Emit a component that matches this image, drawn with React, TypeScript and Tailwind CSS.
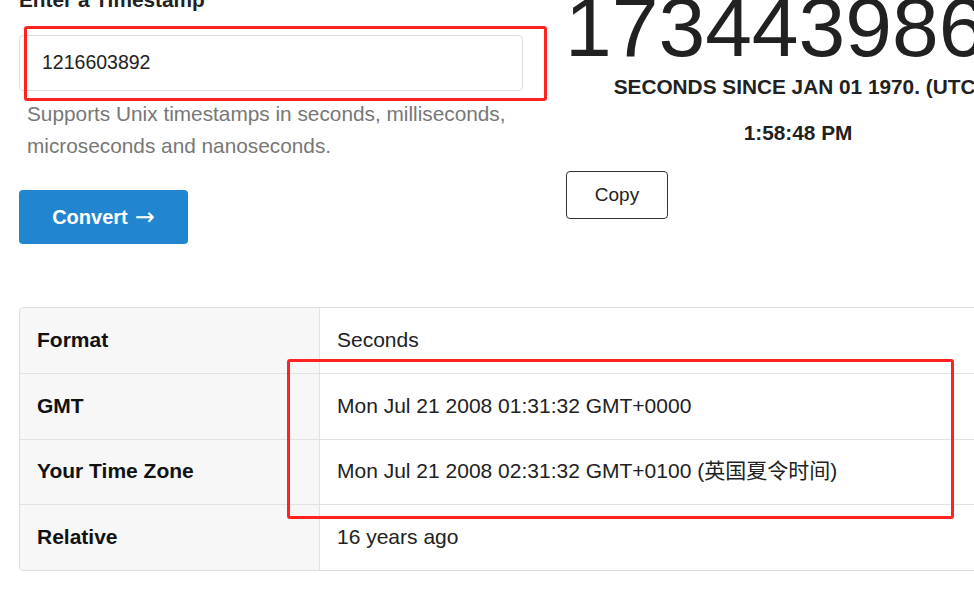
import React from "react";

const rows = [
  { label: "Format", value: "Seconds" },
  { label: "GMT", value: "Mon Jul 21 2008 01:31:32 GMT+0000" },
  { label: "Your Time Zone", value: "Mon Jul 21 2008 02:31:32 GMT+0100 (英国夏令时间)" },
  { label: "Relative", value: "16 years ago" },
];

export default function App() {
  return (
    <div className="relative w-[974px] h-[595px] overflow-hidden bg-white font-['Liberation_Sans','Noto_Sans_CJK_SC',sans-serif] text-[#212121]">
      <div className="flex items-start pl-[19px] -mt-[13px]">
        {/* converter input */}
        <div className="w-[504px] shrink-0">
          <label className="block h-[26px] text-[20.8px] leading-[26px] font-bold">
            Enter a Timestamp
          </label>
          <div className="mt-[22px] flex h-[56px] items-center rounded-[4px] border border-[#dedede] pl-[22px] text-[19.5px]">
            1216603892
          </div>
          <p className="ml-[8px] mt-[7px] w-[496px] text-[20.8px] leading-[32px] text-[#777]">
            Supports Unix timestamps in seconds, milliseconds, microseconds and nanoseconds.
          </p>
          <button className="mt-[28px] flex h-[54px] w-[169px] items-center justify-center gap-[7px] rounded-[4px] bg-[#2185d0] text-[20px] font-bold text-white">
            Convert
            <span className="font-['DejaVu_Sans'] text-[24px] font-normal leading-none">→</span>
          </button>
        </div>

        {/* current epoch */}
        <div className="ml-[42px] -mt-[2px] w-[466px] shrink-0 text-center">
          <div className="whitespace-nowrap text-[84px] leading-[84px]">1734439868</div>
          <div className="mt-[4px] whitespace-nowrap text-[20.8px] leading-[28px] font-bold uppercase">
            Seconds since Jan 01 1970. (UTC)
          </div>
          <div className="mt-[18px] text-[20.8px] leading-[28px] font-bold">1:58:48 PM</div>
          <div className="mt-[24px] flex">
            <button className="ml-[1px] h-[48px] w-[102px] rounded-[4px] border border-[#333] bg-white text-[19px] text-[#222]">
              Copy
            </button>
          </div>
        </div>
      </div>

      <div className="ml-[19px] mt-[63px] w-[1040px] overflow-hidden rounded-[4px] border border-[#dcdcdc]">
        {rows.map((row, i) => (
          <div
            key={row.label}
            className={`flex text-[21px] ${i > 0 ? "border-t border-[#e2e2e2]" : ""} ${
              i % 2 === 0 ? "h-[65px]" : "h-[66px]"
            }`}
          >
            <div className="flex w-[300px] shrink-0 items-center border-r border-[#e2e2e2] bg-[#f7f7f7] pl-[17px] pb-[2px] font-bold text-[#111]">
              {row.label}
            </div>
            <div className="flex items-center pl-[17px] pb-[2px]">{row.value}</div>
          </div>
        ))}
      </div>

      {/* red annotation boxes */}
      <div className="pointer-events-none absolute left-[24px] top-[26px] h-[75px] w-[523px] rounded-[3px] border-[3px] border-[#ff2222]" />
      <div className="pointer-events-none absolute left-[287px] top-[359px] h-[160px] w-[667px] rounded-[3px] border-[3px] border-[#ff2222]" />
    </div>
  );
}
